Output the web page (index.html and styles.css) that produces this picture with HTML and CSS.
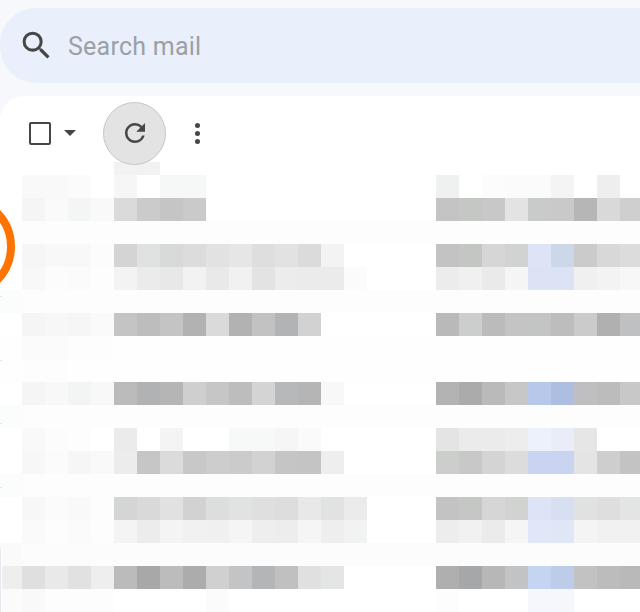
FILE: index.html
```html
<!DOCTYPE html>
<html lang="en">
<head>
    <meta charset="UTF-8">
    <meta name="viewport" content="width=device-width, initial-scale=1.0">
    <title>Mail</title>
    <link rel="stylesheet" href="styles.css">
</head>
<body>
    <!-- Suche -->
    <header class="search-bar">
        <svg class="search-icon" width="37" height="37" viewBox="0 0 24 24">
            <path d="M15.5 14h-.79l-.28-.27A6.471 6.471 0 0 0 16 9.5 6.5 6.5 0 1 0 9.5 16c1.61 0 3.09-.59 4.23-1.57l.27.28v.79l5 4.99L20.49 19l-4.99-5zm-6 0C7.01 14 5 11.99 5 9.5S7.01 5 9.5 5 14 7.01 14 9.5 11.99 14 9.5 14z"/>
        </svg>
        <span class="search-text">Search mail</span>
    </header>

    <main class="panel">
        <!-- Toolbar -->
        <div class="toolbar">
            <span class="checkbox"></span>
            <span class="caret"></span>
            <button type="button" class="refresh-btn">
                <svg width="30" height="30" viewBox="0 0 24 24">
                    <path d="M17.65 6.35A7.958 7.958 0 0 0 12 4c-4.42 0-7.99 3.58-7.99 8s3.57 8 7.99 8c3.73 0 6.84-2.55 7.73-6h-2.08A5.99 5.99 0 0 1 12 18c-3.31 0-6-2.69-6-6s2.69-6 6-6c1.66 0 3.14.69 4.22 1.78L13 11h7V4l-2.35 2.35z"/>
                </svg>
            </button>
            <span class="more-dots"><i></i><i></i><i></i></span>
        </div>

        <!-- verpixelte Nachrichten, wird von script.js gefuellt -->
        <div class="mosaic" id="mosaic"></div>
    </main>

    <!-- Markierung am linken Rand -->
    <svg class="ring" width="16" height="104" viewBox="0 0 16 104">
        <circle cx="-37" cy="51.5" r="48"/>
    </svg>
    <span class="edge-ticks"></span>
    <span class="edge-line"></span>

    <script src="script.js"></script>
</body>
</html>
```

FILE: styles.css
```css
* {
    margin: 0;
    padding: 0;
    box-sizing: border-box;
}

html, body {
    height: 100%;
    overflow: hidden;
}

body {
    font-family: Roboto, "Liberation Sans", sans-serif;
    background-color: #f6f8fc;
    padding-top: 8px;
}

.search-bar {
    height: 75px;
    display: flex;
    align-items: center;
    gap: 13px;
    padding-left: 18px;
    background-color: #e9f0fb;
    border-radius: 36px 0 0 36px;
}

.search-icon {
    fill: #444746;
    flex-shrink: 0;
}

.search-text {
    padding-top: 2px;
    font-size: 25px;
    letter-spacing: 0.25px;
    color: #9aa0a6;
}

.panel {
    margin-top: 13px;
    background-color: #fff;
    border-radius: 24px 0 0 0;
    overflow: hidden;
}

.toolbar {
    height: 74px;
    margin-bottom: -8px;
    display: flex;
    align-items: center;
    padding-left: 29px;
    position: relative;
    z-index: 1;
}

.checkbox {
    width: 22px;
    height: 23px;
    border: 2.5px solid #444746;
    border-radius: 2px;
}

.caret {
    width: 0;
    height: 0;
    margin-left: 13px;
    border-left: 6.5px solid transparent;
    border-right: 6.5px solid transparent;
    border-top: 6.5px solid #444746;
}

.refresh-btn {
    width: 63px;
    height: 63px;
    margin-left: 27px;
    flex-shrink: 0;
    display: flex;
    align-items: center;
    justify-content: center;
    background-color: #e3e3e3;
    border: 1.5px solid #c4c7c8;
    border-radius: 50%;
}

.refresh-btn svg {
    fill: #444746;
}

.more-dots {
    margin-left: 29px;
    display: flex;
    flex-direction: column;
    gap: 3px;
}

.more-dots i {
    display: block;
    width: 5px;
    height: 5px;
    border-radius: 50%;
    background-color: #444746;
}

.mosaic {
    display: grid;
    grid-template-columns: 22px repeat(26, 23px) 20px;
    grid-template-rows: 13px;
    grid-auto-rows: 23px;
}

.ring {
    position: absolute;
    top: 195px;
    left: 0;
}

.ring circle {
    fill: none;
    stroke: #ff7300;
    stroke-width: 8;
}

.edge-ticks {
    position: absolute;
    top: 296px;
    left: 0;
    width: 2px;
    height: 1px;
    background-color: #e4e4e4;
    box-shadow: 0 64px 0 #e4e4e4, 0 127px 0 #e4e4e4, 0 191px 0 #e4e4e4;
}

.edge-line {
    position: absolute;
    top: 549px;
    left: 0;
    width: 2px;
    height: 63px;
    background-color: #fff;
    border-left: 1px solid #e6e6ee;
}
```

FILE: script.js
```js
// Zeilen des Mosaiks, eine Farbe pro Spalte. Linke Spalten ab x = 0, Zelle 23px breit.
// "-" heisst: Grundfarbe der Zeile
const rows = [
    { base: "", cells: "- - - - - f1f2f1 f1f2f1" },
    { base: "", cells: "- f9f9f9 f9f9f9 fbfbfb - f6f6f6 - f6f8f7 f6f8f7 - - - - - - - - - - eff1f0 - fcfcfc fbfbfb fafbfa f4f4f4 - eeeeee -" },
    { base: "", cells: "- f5f5f5 fafafa f4f6f5 f9f9f9 dadada cbcbcb c4c5c4 cacaca - - - - - - - - - - c4c4c4 c5c7c5 c8c8c8 e3e3e3 c9cbca c8c9c8 b6b6b6 d9d9d9 cfcfcf" },
    { base: "fdfdfd", cells: "" },
    { base: "", cells: "- f6f6f6 f8f8f8 f7f8f7 fcfcfc d4d4d4 e0e2e1 d8dad9 dcdcdc e2e2e2 e6e6e6 dedede e2e2e2 dbdbdb f2f3f2 - - - - c3c3c3 c4c6c4 d6d6d6 d1d3d2 dde4f5 ccd7ea cbcbcb d8d8d8 dcdcdc" },
    { base: "", cells: "- f8f8f8 fcfcfc fbfbfb fdfdfd f3f3f3 ebebeb e8e8e8 f2f2f2 e9e9e9 f1f1f1 e3e3e3 ececec ebebeb ebebeb fbfbfb - - - ececec f0f0f0 eaeaea f5f5f5 dce3f5 dce3f5 f0f0f0 f3f3f3 f7f7f7" },
    { base: "fdfdfd", cells: "fbfdfd" },
    { base: "", cells: "- f5f5f5 f7f7f7 f6f6f6 fafafa c4c4c4 bdbdbd c4c4c4 b2b2b2 dadada b2b2b2 c2c2c2 b2b3b4 d2d2d2 - - - - - b9b9b9 cbcecc bbbbbb c4c4c4 c3c5c4 bcbdbc cbcbcb b0b0b0 bfc0c2" },
    { base: "fefefe", cells: "- fbfbfb fbfbfb fdfdfd fdfdfd" },
    { base: "fefefe", cells: "- fdfdfd fdfdfd" },
    { base: "", cells: "- f5f5f5 f8f8f8 f3f5f4 f8f8f8 bbbbbb b1b2b3 b5b5b5 cfcfcf c6c6c6 bdbdbd d4d4d4 b7b8ba b5b5b5 f8f8f8 - - - - b3b3b3 ababab bababa c7c7c7 b7c8ea aebde2 bfbfc1 bcbcbc c8c8c8" },
    { base: "fdfdfd", cells: "fbfdfd" },
    { base: "", cells: "- f9f9f9 fcfcfc fdfdfd - ebebeb - f4f4f4 - - f7f9f8 f7f9f8 f6f6f6 f9faf9 - - - - - e4e4e4 ebebeb ebebeb ededed edf1fb e9edf8 e6e6e6 - -" },
    { base: "", cells: "- f7f7f7 fbfbfb f6f6f6 f9f9f9 ececec c6c6c6 dbdbdb c8c8c8 cdcdcd cbcbcb d2d2d2 c5c5c5 c4c4c4 eeeeee - - - - cccecc c8c8c8 d4d4d4 dcdcdc c9d5f0 c9d5f0 e4e4e4 cecece c3c3c3" },
    { base: "fdfdfd", cells: "fbfdfd" },
    { base: "", cells: "- f7f7f7 fbfbfb f9f9f9 fdfdfd d4d6d5 d9d9d9 e1e1e1 d2d2d2 dcdedd e0e3e2 dfdfdf dddddd e8e8e8 e1e3e2 ebebeb - - - c3c3c3 c5c7c5 d6d6d6 d1d3d1 dde4f6 d9dff2 e0e2e1 dedede e3e5e4" },
    { base: "", cells: "- fafafa fdfdfd fbfbfb fdfdfd f4f4f4 ececec f4f4f4 f1f1f1 f0f0f0 f5f5f5 eeeeee ededed f5f5f5 eeeeee f1f3f2 - - - ededed f1f1f1 ebebeb f5f5f5 e1e7f8 dfe6f5 f4f4f4 f1f1f1 f1f1f1" },
    { base: "fcfcfc", cells: "fafafa" },
    { base: "", cells: "eeeeee dfdfdf e9e9e9 e1e1e1 eeeeee bbbbbb a8a8a9 bcbcbc acacac d0d0d0 c3c4c6 b4b5b7 c0c0c0 e0e0e0 e4e6e5 - - - - afafaf a6a7a9 b7b7b7 c2c3c5 c5d4f0 bdcce9 c2c2c2 bcbcbc b9b9b9" },
    { base: "", cells: "fbfbfb f9f9f9 fdfdfd fdfdfd fdfdfd - - - - fbfbfb - - - - - - - - - fdfdfd - - - f5f7fc f5f7fc" }
];

const mosaic = document.getElementById("mosaic");

rows.forEach(function (row) {
    const colours = row.cells.split(" ");
    for (let i = 0; i < 28; i++) {
        let colour = colours[i];
        if (!colour || colour === "-") {
            colour = row.base;
        }
        const cell = document.createElement("div");
        if (colour) {
            cell.style.backgroundColor = "#" + colour;
        }
        mosaic.appendChild(cell);
    }
});
```
